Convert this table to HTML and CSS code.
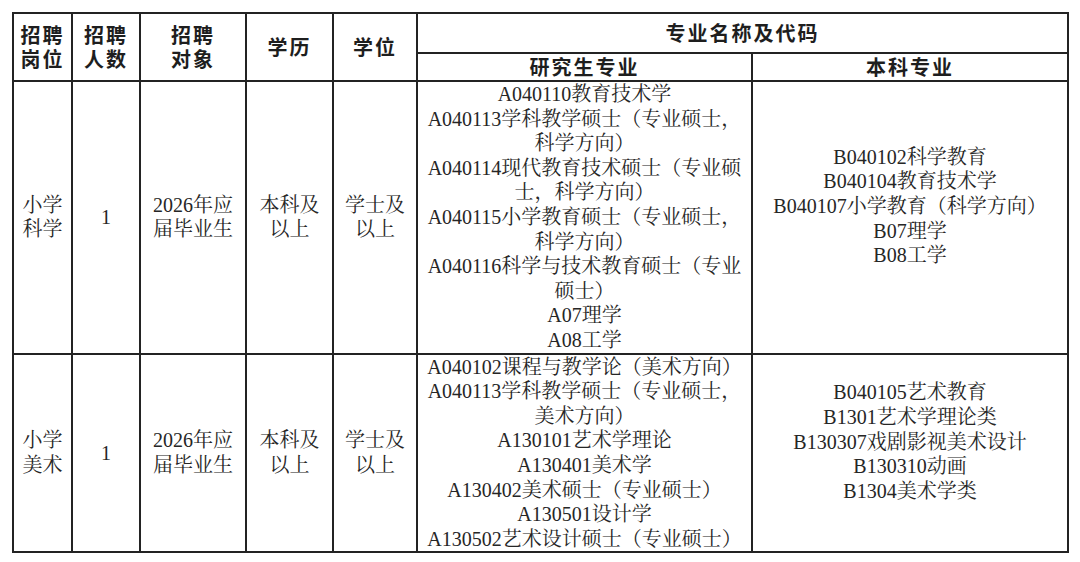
FILE: index.html
```html
<!DOCTYPE html>
<html lang="zh-CN">
<head>
<meta charset="utf-8">
<title>招聘岗位</title>
<link rel="stylesheet" href="styles.css">
</head>
<body>
<table class="grid">
  <colgroup>
    <col class="c1"><col class="c2"><col class="c3"><col class="c4"><col class="c5"><col class="c6"><col class="c7">
  </colgroup>
  <thead>
    <tr class="h1">
      <th rowspan="2">招聘<br>岗位</th>
      <th rowspan="2">招聘<br>人数</th>
      <th rowspan="2">招聘<br>对象</th>
      <th rowspan="2">学历</th>
      <th rowspan="2">学位</th>
      <th colspan="2">专业名称及代码</th>
    </tr>
    <tr class="h2">
      <th>研究生专业</th>
      <th>本科专业</th>
    </tr>
  </thead>
  <tbody>
    <tr class="r1">
      <td>小学<br>科学</td>
      <td>1</td>
      <td>2026年应<br>届毕业生</td>
      <td>本科及<br>以上</td>
      <td>学士及<br>以上</td>
      <td class="list">
        <div>A040110教育技术学</div>
        <div>A040113学科教学硕士（专业硕士，</div>
        <div>科学方向）</div>
        <div>A040114现代教育技术硕士（专业硕</div>
        <div>士，科学方向）</div>
        <div>A040115小学教育硕士（专业硕士，</div>
        <div>科学方向）</div>
        <div>A040116科学与技术教育硕士（专业</div>
        <div>硕士）</div>
        <div>A07理学</div>
        <div>A08工学</div>
      </td>
      <td class="list under">
        <div>B040102科学教育</div>
        <div>B040104教育技术学</div>
        <div>B040107小学教育（科学方向）</div>
        <div>B07理学</div>
        <div>B08工学</div>
      </td>
    </tr>
    <tr class="r2">
      <td>小学<br>美术</td>
      <td>1</td>
      <td>2026年应<br>届毕业生</td>
      <td>本科及<br>以上</td>
      <td>学士及<br>以上</td>
      <td class="list">
        <div>A040102课程与教学论（美术方向）</div>
        <div>A040113学科教学硕士（专业硕士，</div>
        <div>美术方向）</div>
        <div>A130101艺术学理论</div>
        <div>A130401美术学</div>
        <div>A130402美术硕士（专业硕士）</div>
        <div>A130501设计学</div>
        <div>A130502艺术设计硕士（专业硕士）</div>
      </td>
      <td class="list under">
        <div>B040105艺术教育</div>
        <div>B1301艺术学理论类</div>
        <div>B130307戏剧影视美术设计</div>
        <div>B130310动画</div>
        <div>B1304美术学类</div>
      </td>
    </tr>
  </tbody>
</table>
</body>
</html>
```

FILE: styles.css
```css
html, body {
  margin: 0;
  padding: 0;
  background: #ffffff;
}
body {
  padding: 12px 0 0 12px;
}
.grid {
  border-collapse: collapse;
  table-layout: fixed;
  width: 1055px;
  color: #1e1e1e;
}
.c1 { width: 59px; }
.c2 { width: 68px; }
.c3 { width: 106px; }
.c4 { width: 87px; }
.c5 { width: 84px; }
.c6 { width: 335px; }
.c7 { width: 316px; }
.grid th, .grid td {
  border: 2px solid #232323;
  padding: 0;
  text-align: center;
  vertical-align: middle;
}
.grid th {
  font-family: "Noto Sans CJK SC", "Noto Sans", sans-serif;
  font-weight: 700;
  font-size: 20px;
  letter-spacing: 2px;
  line-height: 24px;
}
.h1 { height: 40px; }
.h2 { height: 28px; }
.h2 th { line-height: 24px; }
.grid td {
  font-family: "Liberation Serif", "Noto Serif CJK SC", "Noto Sans CJK SC", serif;
  font-weight: 400;
  font-size: 20px;
  line-height: 24.6px;
  color: #262626;
}
.list div {
  white-space: nowrap;
}
.grid td.under {
  padding-bottom: 22px;
}
.r1 { height: 272px; }
.r2 { height: 197px; }
```
